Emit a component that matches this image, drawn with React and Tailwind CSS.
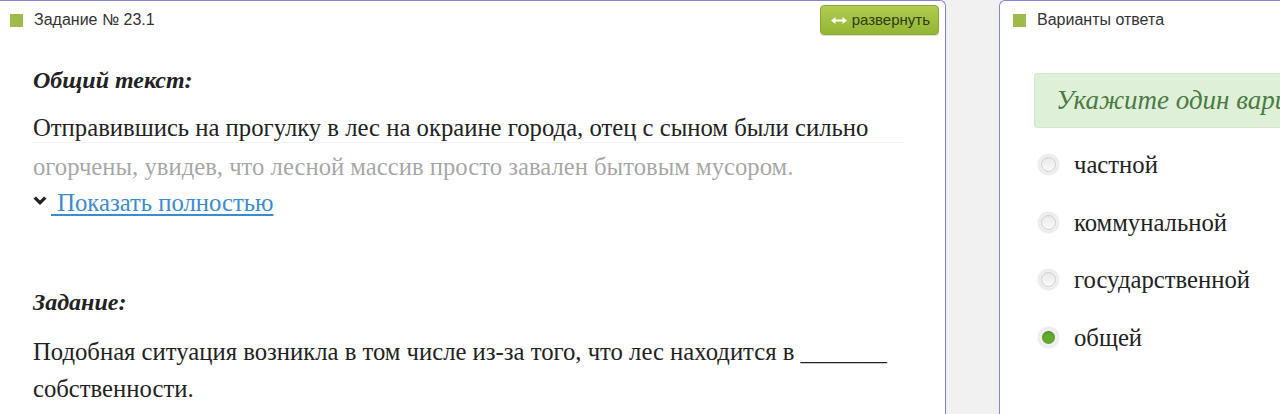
import { useState } from 'react'

const serif = "font-['Liberation_Serif','Times_New_Roman',serif]"
const sans = "font-['Liberation_Sans',Arial,sans-serif]"

const options = ['частной', 'коммунальной', 'государственной', 'общей']

function Marker() {
  return <span className="w-[13px] h-[13px] bg-[#9fb94a] shrink-0" />
}

function Radio({ checked }) {
  return (
    <span className="w-[19px] h-[19px] rounded-full bg-[#f0f0f0] shadow-[0_0_2px_1px_rgba(0,0,0,0.12)] flex items-center justify-center shrink-0">
      <span
        className={
          checked
            ? 'w-[13px] h-[13px] rounded-full bg-[#62ab2c] shadow-[inset_0_1px_2px_rgba(0,0,0,0.25)]'
            : 'w-[15px] h-[15px] rounded-full border border-[#cfcfcf] bg-gradient-to-b from-[#e9e9e9] to-[#fafafa]'
        }
      />
    </span>
  )
}

export default function App() {
  const [selected, setSelected] = useState(3)

  return (
    <div className="w-[1280px] h-[414px] overflow-hidden bg-[#f1f1f1] flex items-start">
      {/* Task panel */}
      <div className="w-[946px] h-[430px] shrink-0 bg-white border-t border-r border-[#8383d4] rounded-tr-[6px]">
        <div className={`flex items-center justify-between h-[38px] pl-[10px] pr-[6px] ${sans}`}>
          <div className="flex items-center gap-[11px] text-[16px] text-[#333]">
            <Marker />
            <span>Задание № 23.1</span>
          </div>
          <button className="h-[30px] pl-[10px] pr-[8px] flex items-center gap-[5px] rounded-[4px] bg-gradient-to-b from-[#b0cc52] to-[#93b631] border border-[#8aa93a] text-[15px] text-[#2f3a10] shadow-[0_1px_1px_rgba(0,0,0,0.15)]">
            <svg width="16" height="9" viewBox="0 0 16 9" fill="#fff">
              <path d="M0 4.5 L4.5 1 L4.5 3.5 L11.5 3.5 L11.5 1 L16 4.5 L11.5 8 L11.5 5.5 L4.5 5.5 L4.5 8 Z" />
            </svg>
            развернуть
          </button>
        </div>

        <div className={`pl-[33px] pr-[40px] text-[24.7px] text-[#222] ${serif}`}>
          <p className="mt-[26px] text-[24px] font-bold italic leading-[30px]">Общий текст:</p>
          <div className="relative mt-[13px] w-[870px] h-[76px] overflow-hidden leading-[39px]">
            <p>
              Отправившись на прогулку в лес на окраине города, отец с сыном были сильно огорчены, увидев, что
              лесной массив просто завален бытовым мусором.
            </p>
            <div className="absolute left-0 right-0 top-[34px] h-[42px] bg-white/60 border-t border-[#f3f3f3]" />
          </div>
          <div className="mt-[3px] flex items-center leading-[32px]">
            <svg width="14" height="10" viewBox="0 0 14 10" className="mr-[4px] mt-[-5px]">
              <path d="M0.5 2.5 L3 0.5 L7 4.5 L11 0.5 L13.5 2.5 L7 9 Z" fill="#222" />
            </svg>
            <a href="#" className="text-[#3b8bd0] underline underline-offset-[3px]">&nbsp;Показать полностью</a>
          </div>

          <p className="mt-[68px] text-[24px] font-bold italic leading-[30px]">Задание:</p>
          <p className="mt-[16px] w-[870px] leading-[37px]">
            Подобная ситуация возникла в том числе из-за того, что лес находится в _______ собственности.
          </p>
        </div>
      </div>

      {/* Answer panel */}
      <div className="ml-[53px] flex-1 h-[430px] bg-white border-t border-l border-[#8383d4] rounded-tl-[6px]">
        <div className={`flex items-center gap-[11px] h-[38px] pl-[13px] text-[16px] text-[#333] ${sans}`}>
          <Marker />
          <span>Варианты ответа</span>
        </div>
        <div className={`pl-[34px] ${serif}`}>
          <div className="mt-[34px] h-[55px] flex items-center pl-[21px] rounded-l-[4px] bg-[#dff0d8] border border-r-0 border-[#d3e8c7] text-[27px] italic text-[#4b7a45] whitespace-nowrap overflow-hidden">
            Укажите один вариант ответа
          </div>
          <div className="mt-[8px] flex flex-col">
            {options.map((o, i) => (
              <label
                key={o}
                onClick={() => setSelected(i)}
                className="h-[57.5px] flex items-center gap-[16px] pl-[5px] text-[24.7px] text-[#222] cursor-pointer"
              >
                <Radio checked={selected === i} />
                <span>{o}</span>
              </label>
            ))}
          </div>
        </div>
      </div>
    </div>
  )
}
